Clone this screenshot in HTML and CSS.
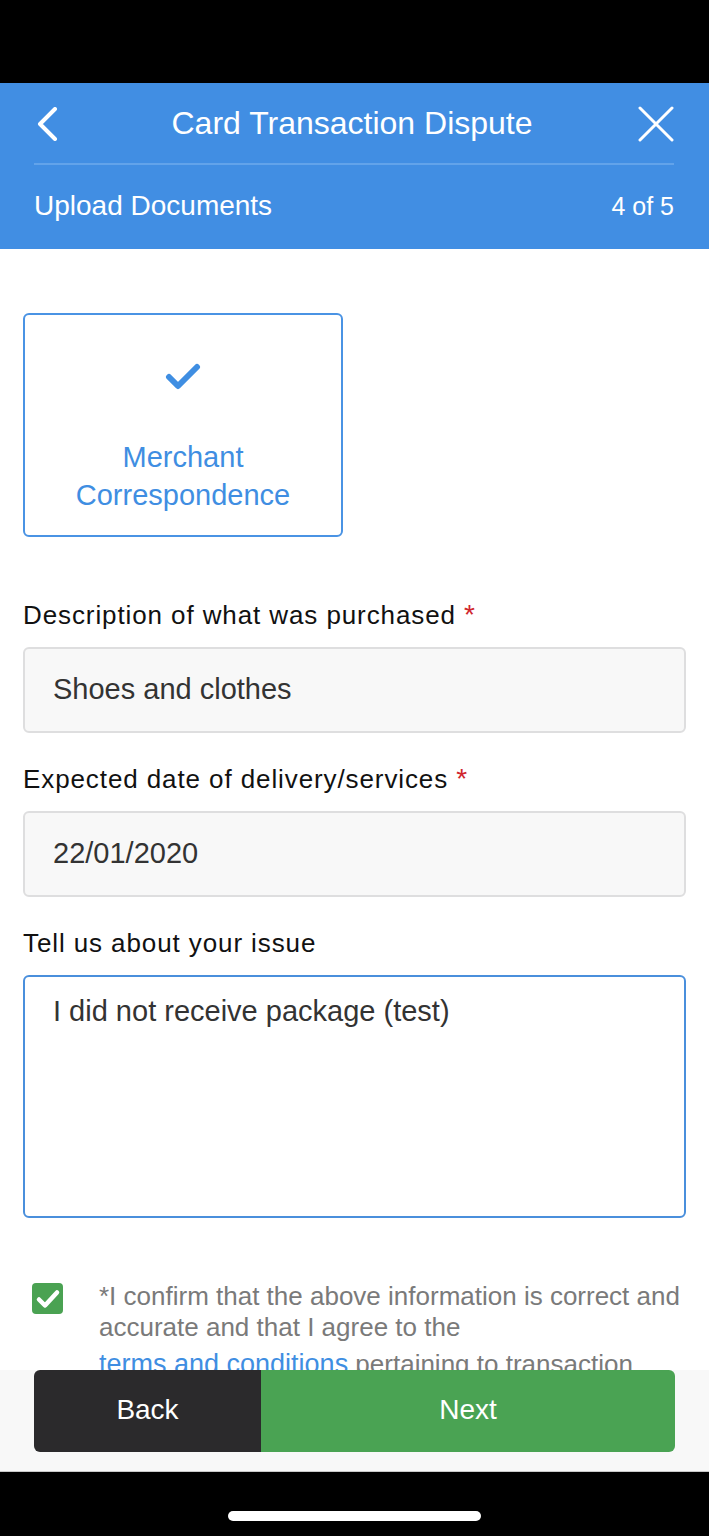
FILE: index.html
```html
<!DOCTYPE html>
<html lang="en">
<head>
  <meta charset="UTF-8">
  <meta name="viewport" content="width=device-width, initial-scale=1.0">
  <title>Card Transaction Dispute</title>
  <link rel="stylesheet" href="styles.css">
</head>
<body>
  <div class="phone">
    <div class="status-bar"></div>

    <header class="header">
      <div class="header-top">
        <a href="#" class="icon-btn">
          <svg width="24" height="34" viewBox="0 0 24 34"><path d="M21 2 L6 17 L21 32" fill="none" stroke="#fff" stroke-width="4" stroke-linecap="round" stroke-linejoin="round"/></svg>
        </a>
        <h1>Card Transaction Dispute</h1>
        <a href="#" class="icon-btn">
          <svg width="36" height="36" viewBox="0 0 36 36"><path d="M2 2 L34 34 M34 2 L2 34" fill="none" stroke="#fff" stroke-width="3" stroke-linecap="round"/></svg>
        </a>
      </div>
      <div class="header-sub">
        <span>Upload Documents</span>
        <span class="step">4 of 5</span>
      </div>
    </header>

    <main class="content">
      <div class="doc-card">
        <svg width="36" height="28" viewBox="0 0 36 28"><path d="M4 14 L13 23 L32 4" fill="none" stroke="#3f8ee2" stroke-width="6" stroke-linecap="round" stroke-linejoin="round"/></svg>
        <p>Merchant<br>Correspondence</p>
      </div>

      <label class="field-label">Description of what was purchased <span class="req">*</span></label>
      <div class="input">Shoes and clothes</div>

      <label class="field-label">Expected date of delivery/services <span class="req">*</span></label>
      <div class="input">22/01/2020</div>

      <label class="field-label">Tell us about your issue</label>
      <div class="textarea">I did not receive package (test)</div>

      <div class="confirm">
        <span class="checkbox">
          <svg width="30" height="30" viewBox="0 0 30 30"><path d="M6 15.5 L12 21.5 L24 8.5" fill="none" stroke="#fff" stroke-width="4.5" stroke-linecap="round" stroke-linejoin="round"/></svg>
        </span>
        <p>*I confirm that the above information is correct and accurate and that I agree to the<br><a href="#">terms and conditions</a> pertaining to transaction disputes.</p>
      </div>
    </main>

    <footer class="footer">
      <a href="#" class="btn btn-back">Back</a>
      <a href="#" class="btn btn-next">Next</a>
    </footer>

    <div class="home-bar"><span></span></div>
  </div>
</body>
</html>
```

FILE: styles.css
```css
* {
  margin: 0;
  padding: 0;
  box-sizing: border-box;
  font-family: "Liberation Sans", Arial, sans-serif;
}

body {
  background: #000;
}

.phone {
  width: 709px;
  height: 1536px;
  display: flex;
  flex-direction: column;
  background: #fff;
}

.status-bar {
  height: 83px;
  background: #000;
  flex-shrink: 0;
}

.header {
  background: #418ee3;
  color: #fff;
  padding: 0 35px 0 34px;
  height: 166px;
  flex-shrink: 0;
}

.header-top {
  display: flex;
  align-items: center;
  justify-content: space-between;
  height: 82px;
  border-bottom: 2px solid #62a3ea;
}

.header-top h1 {
  font-size: 32px;
  font-weight: 300;
  margin-left: 8px;
}

.icon-btn {
  display: flex;
  align-items: center;
  margin-top: 2px;
}

.header-sub {
  display: flex;
  justify-content: space-between;
  align-items: center;
  height: 82px;
  font-size: 28px;
  font-weight: 300;
}

.header-sub .step {
  font-size: 25px;
}

.content {
  flex: 1;
  min-height: 0;
  overflow: hidden;
  padding: 64px 23px 0;
}

.doc-card {
  width: 320px;
  height: 224px;
  border: 2px solid #4a93e4;
  border-radius: 6px;
  display: flex;
  flex-direction: column;
  align-items: center;
  padding-top: 48px;
  margin-bottom: 62px;
}

.doc-card p {
  color: #3f8ee2;
  font-size: 29px;
  line-height: 38px;
  text-align: center;
  margin-top: 47px;
}

.field-label {
  display: block;
  font-size: 26px;
  color: #111;
  letter-spacing: 0.9px;
  height: 32px;
  line-height: 32px;
  margin-bottom: 16px;
}

.req {
  color: #d0262d;
  font-size: 28px;
}

.input {
  height: 86px;
  background: #f8f8f8;
  border: 2px solid #dededf;
  border-radius: 6px;
  padding: 0 28px 2px;
  display: flex;
  align-items: center;
  font-size: 29px;
  color: #333;
  margin-bottom: 30px;
}

.textarea {
  height: 243px;
  border: 2px solid #4a8fdc;
  border-radius: 6px;
  padding: 18px 28px;
  font-size: 29px;
  color: #333;
  margin-bottom: 63px;
}

.confirm {
  display: flex;
  align-items: flex-start;
  gap: 36px;
  padding-left: 9px;
}

.checkbox {
  flex-shrink: 0;
  width: 31px;
  height: 31px;
  background: #4aa252;
  border-radius: 4px;
  display: flex;
  align-items: center;
  justify-content: center;
  margin-top: 2px;
}

.confirm p {
  font-size: 26px;
  font-weight: 300;
  color: #7a7a7a;
  line-height: 31px;
}

.confirm a {
  color: #3f8ee2;
  font-size: 27px;
  text-decoration: underline;
  line-height: 42px;
}

.footer {
  flex-shrink: 0;
  height: 102px;
  background: #f8f8f8;
  border-bottom: 1px solid #c8c8c8;
  display: flex;
  padding: 0 34px 19px;
}

.btn {
  display: flex;
  align-items: center;
  justify-content: center;
  color: #fff;
  text-decoration: none;
  font-size: 28px;
  padding-bottom: 2px;
}

.btn-back {
  width: 227px;
  background: #2b2a2c;
  border-radius: 6px 0 0 6px;
}

.btn-next {
  flex: 1;
  background: #4aa353;
  border-radius: 0 6px 6px 0;
}

.home-bar {
  height: 64px;
  flex-shrink: 0;
  background: #000;
  display: flex;
  justify-content: center;
  align-items: flex-end;
  padding-bottom: 15px;
}

.home-bar span {
  width: 253px;
  height: 10px;
  background: #fff;
  border-radius: 5px;
}
```
